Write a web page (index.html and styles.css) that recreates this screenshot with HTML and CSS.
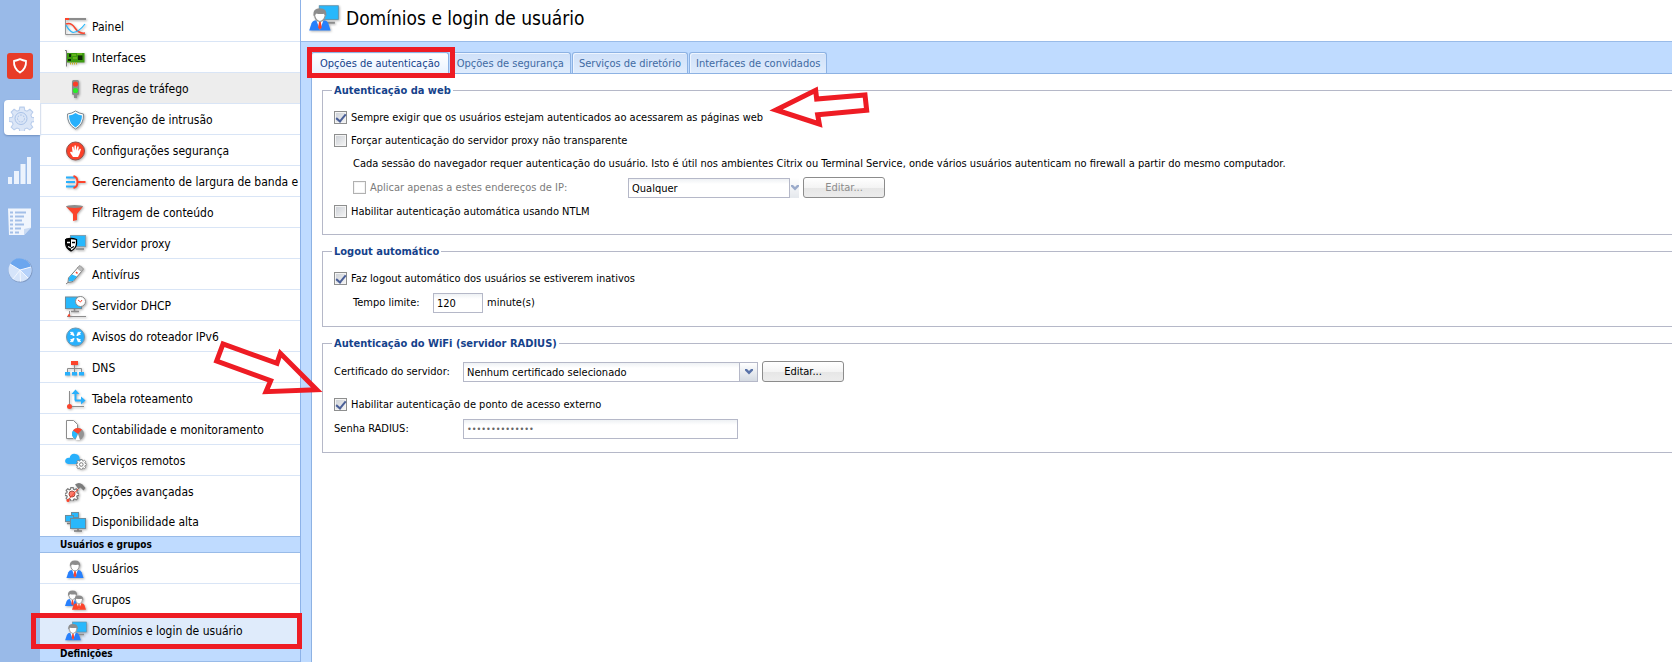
FILE: index.html
```html
<!DOCTYPE html>
<html lang="pt-BR">
<head>
  <meta charset="UTF-8" />
  <meta name="viewport" content="width=device-width, initial-scale=1.0" />
  <title>Domínios e login de usuário</title>
  <link rel="stylesheet" href="styles.css">
</head>
<body>
  <svg class="defs" aria-hidden="true">
    <symbol id="person" viewBox="0 0 18 20">
      <path d="M0 19 L2 13 Q3 10.500 6 10.500 L12 10.500 Q15 10.500 16 13 L18 19Z" fill="#2880fc"/>
      <path d="M6 10.500 L9 18.500 L12 10.500Z" fill="#fff"/>
      <path d="M8.300 11.500 h1.400 l.8 5 -1.500 2 -1.500 -2z" fill="#fc442c"/>
      <path d="M4.500 6 Q5 11 9 11.500 Q13 11 13.500 6 L12 4 H6Z" fill="#fff" stroke="#949494"/>
      <path d="M3.500 6.500 Q3 .5 9 .5 Q15 .5 14.500 6.500 Q13.500 7 13 4.500 Q10 6 5.500 4.500 Q4.500 7 3.500 6.500Z" fill="#8c8c8c"/>
    </symbol>
    <symbol id="person-red" viewBox="0 0 18 20">
      <path d="M0 19 L2 13 Q3 10.500 6 10.500 L12 10.500 Q15 10.500 16 13 L18 19Z" fill="#fc442c"/>
      <path d="M6 10.500 L9 18.500 L12 10.500Z" fill="#fff"/>
      <path d="M8.300 11.500 h1.400 l.8 5 -1.500 2 -1.500 -2z" fill="#fc442c"/>
      <path d="M4.500 6 Q5 11 9 11.500 Q13 11 13.500 6 L12 4 H6Z" fill="#fff" stroke="#949494"/>
      <path d="M3.500 6.500 Q3 .5 9 .5 Q15 .5 14.500 6.500 Q13.500 7 13 4.500 Q10 6 5.500 4.500 Q4.500 7 3.500 6.500Z" fill="#8c8c8c"/>
    </symbol>
    <symbol id="login" viewBox="0 0 22 20">
      <rect x="7.500" y="1" width="14" height="10" fill="#28b8fc" stroke="#5f8ea6" stroke-width=".6"/>
      <path d="M13 13.500 h6" stroke="#8c8c8c" stroke-width="1.500"/>
      <use href="#person" x="0" y="2.500" width="16" height="17.500"/>
    </symbol>
    <symbol id="gear" viewBox="0 0 24 24">
      <path d="M10 1h4l.6 3 2 .8L19.300 3 22 5.600 20.200 8.300l.8 2 3 .6v3.300l-3 .6-.9 2 1.800 2.700-2.700 2.500-2.600-1.700-2 .8-.6 2.900h-4l-.6-2.900-2-.8L4.700 22 2 19.500l1.800-2.700-.9-2L0 14.200v-3.300l3-.6.8-2L2 5.600 4.700 3l2.700 1.800 2-.8z"/>
    </symbol>
    <symbol id="chevron" viewBox="0 0 8 6">
      <path d="M0 0 h2 l2 2 2 -2 h2 v1.500 L4 5.500 0 1.500z" fill="#5872a8"/>
    </symbol>
  </svg>

  <nav class="rail" aria-label="Seções">
    <a href="#" class="rail-logo" aria-label="Início">
      <svg width="16" height="16" viewBox="0 0 16 16"><path d="M8 1.200 Q11 2.500 14 3 Q14.500 10.500 8 14.600 Q1.500 10.500 2 3 Q5 2.500 8 1.200Z" fill="none" stroke="#fff" stroke-width="1.800"/></svg>
    </a>
    <a href="#" class="rail-current" aria-label="Configuração">
      <svg width="26" height="26" viewBox="-1 -1 26 26">
        <use href="#gear" fill="#dbe6f7" stroke="#b9cdec"/>
        <circle cx="12" cy="12.500" r="6" fill="none" stroke="#a9c2e8"/>
        <circle cx="12" cy="12.500" r="3.500" fill="#dbe6f7" stroke="#a9c2e8" stroke-dasharray="2 1"/>
      </svg>
    </a>
    <a href="#" aria-label="Estatísticas">
      <svg width="24" height="28" viewBox="0 0 24 28"><path d="M0 20h4v7H0zM6 14h5v13H6zM12.500 7h5v20h-5zM19 0h4v27h-4z" fill="#ecf3fd"/></svg>
    </a>
    <a href="#" aria-label="Registros">
      <svg width="24" height="30" viewBox="0 0 24 30">
        <path d="M0 2.500h23v19L16 29H1z" fill="#f0f5fd"/><path d="M23 21.500 L16 29 v-6z" fill="#c9daf3"/>
        <path d="M2 6.500h3M7 6.500h11M2 10.500h3M7 10.500h9M2 14.500h3M7 14.500h7M2 18.500h3M7 18.500h9M2 22.500h3M7 22.500h6M2 26.500h3M7 26.500h4" stroke="#a3bfe8" stroke-width="2"/>
      </svg>
    </a>
    <a href="#" aria-label="Relatórios">
      <svg width="26" height="26" viewBox="0 0 26 26">
        <circle cx="13.500" cy="13.500" r="12" fill="#7f9ac4"/><circle cx="13" cy="13" r="11.500" fill="#d5e4fa"/>
        <path d="M13 13 L3 7 A11.500 11.500 0 0 1 24 10Z" fill="#6ba6ee"/>
        <path d="M13 13 L24 10 A11.500 11.500 0 0 1 21 21Z" fill="#b6d2fa"/>
        <path d="M13 13 L3 7 M13 13 L6 22 M13 13 L13.500 24.500 M13 13 L21 21 M13 13 L24 10" stroke="#f2f7ff"/>
      </svg>
    </a>
  </nav>

  <nav class="menu" aria-label="Configuração">
    <ul>
      <li><a href="#"><svg class="icon" viewBox="0 0 22 22">
        <path d="M.5 3v15.500h20" fill="none" stroke="#949494"/><path d="M4 3h17" stroke="#8c8c8c" stroke-width="2"/><path d="M0 3h4" stroke="#fc442c" stroke-width="2"/>
        <path d="M1 8 Q6 6 10 12 T20 17" fill="none" stroke="#fc442c" stroke-width="1.500"/><path d="M1 9 Q4 15 8 16.500 Q14 16 20 8" fill="none" stroke="#28b8fc" stroke-width="1.200"/>
      </svg>Painel</a></li>
      <li><a href="#"><svg class="icon" viewBox="0 0 22 22">
        <path d="M0 3.500h1.500v16" fill="none" stroke="#7c7c7c"/><rect x="2" y="6" width="17.500" height="9.500" fill="#3c9a10"/>
        <path d="M4 7h2v3H4zM13 8.500h4.500V13H13zM3 12h3v2H3z" fill="#102808"/><path d="M7 8h4M8 11h4M12 7h5" stroke="#8ccc28"/>
        <path d="M5 16.500h8" stroke="#c8b020" stroke-width="2" stroke-dasharray="1 1"/>
      </svg>Interfaces</a></li>
      <li class="hovered"><a href="#"><svg class="icon" viewBox="0 0 22 22">
        <rect x="7" y="2" width="7" height="15" rx="1.500" fill="#8c8c8c"/><path d="M9 17h3v3H9z" fill="#8c8c8c"/>
        <circle cx="10.500" cy="6" r="2.600" fill="#fc3c28"/><circle cx="10.500" cy="12.500" r="2.600" fill="#28ec28"/>
      </svg>Regras de tráfego</a></li>
      <li><a href="#"><svg class="icon" viewBox="0 0 22 22">
        <path d="M10.500 2 Q14 4.500 18.500 5 Q19 15.500 10.500 20 Q2 15.500 2.500 5 Q7 4.500 10.500 2Z" fill="#fff" stroke="#7c8890"/>
        <path d="M10.500 4 Q13.500 6 17 6.500 Q17 14.500 10.500 18.500 Q4 14.500 4 6.500 Q7.500 6 10.500 4Z" fill="#28b0fc"/>
      </svg>Prevenção de intrusão</a></li>
      <li><a href="#"><svg class="icon" viewBox="0 0 22 22">
        <circle cx="10.500" cy="11" r="9" fill="#fc4028" stroke="#94504a"/>
        <path d="M8 17 L5 12.500 L6 11.500 L7.500 12.500 L7 7 L8.300 6.500 L9.300 10.500 L9.500 5.500 L11 5.500 L11.300 10.500 L12.500 6.200 L13.800 6.700 L13.200 11 L15 8.500 L16 9.200 L14.500 14 L13 17Z" fill="#fff"/>
      </svg>Configurações segurança</a></li>
      <li><a href="#"><svg class="icon" viewBox="0 0 22 22">
        <path d="M1 6.500h9M1 11h9M1 15.500h9" stroke="#28b0fc" stroke-width="2"/><path d="M8.500 5 Q12.500 6 12.500 11 Q12.500 16 8.500 17 M12 11h8.500" fill="none" stroke="#fc442c" stroke-width="2"/>
      </svg>Gerenciamento de largura de banda e QoS</a></li>
      <li><a href="#"><svg class="icon" viewBox="0 0 22 22">
        <path d="M1 4.500h17l-6 7.500v6l-4 1v-7z" fill="#fc442c"/><ellipse cx="9.500" cy="4.500" rx="8.500" ry="1.500" fill="#8c8c8c"/>
      </svg>Filtragem de conteúdo</a></li>
      <li><a href="#"><svg class="icon" viewBox="0 0 22 22">
        <rect x="5.500" y="2.500" width="15" height="11" fill="#28b8fc" stroke="#7ca0b4"/><path d="M11 16h8" stroke="#949494" stroke-width="2"/>
        <path d="M.7 6.500 Q6 4.500 11.500 6.500 V11 Q11 15.500 6 18 Q1 15.500.7 11Z" fill="#fff"/><path d="M6 5.500h-5V11q.5 5 5 7z" fill="#000"/>
        <path d="M.7 6.500 Q6 4.500 11.500 6.500 V11 Q11 15.500 6 18 Q1 15.500.7 11Z" fill="none" stroke="#000" stroke-width="1.300"/><path d="M2 9.500h3M3 13.500l3 1.500" stroke="#fff" stroke-width="1.300"/><path d="M7 9.500h3M6 15l3-1.500" stroke="#000" stroke-width="1.300"/>
      </svg>Servidor proxy</a></li>
      <li><a href="#"><svg class="icon" viewBox="0 0 22 22">
        <path d="M3.500 14 L12.500 4 L16.500 7.500 L8 17.500 L3 18.500Z" fill="#fff" stroke="#7c7c7c"/><path d="M4 13.500 L7 10.500 L12 12.500 L8 17 L3.500 17.500Z" fill="#28b8fc"/>
        <path d="M3 18.500 L1 20" stroke="#7c7c7c"/><path d="M12 4 L15 1.500 L18.500 5 L16.500 7.500" fill="#bbb" stroke="#949494"/><path d="M11 8 l1.500 1.500" stroke="#fc442c" stroke-width="1.500"/>
      </svg>Antivírus</a></li>
      <li><a href="#"><svg class="icon" viewBox="0 0 22 22">
        <rect x=".5" y="2" width="16" height="11.500" fill="#28b8fc" stroke="#6c8c9c"/><path d="M9.500 14v2.500M6 16.500h8" stroke="#8c8c8c" stroke-width="1.500"/><path d="M4.500 16v5M2 21.500h19" stroke="#8c8c8c"/>
        <circle cx="4" cy="20.500" r="1.200" fill="#fc442c"/><circle cx="15.500" cy="6.500" r="5" fill="#fff" stroke="#8c8c8c"/><path d="M13 5l2.500 2 1.500-2" fill="none" stroke="#fc442c"/>
      </svg>Servidor DHCP</a></li>
      <li><a href="#"><svg class="icon" viewBox="0 0 22 22">
        <circle cx="10.500" cy="11" r="9" fill="#28b0fc" stroke="#6c98b0"/><path d="M5.500 6l3.500 3.500M15.500 6L12 9.500M5.500 16L9 12.500M15.500 16L12 12.500" stroke="#fff" stroke-width="1.600"/>
        <path d="M8 5.500l1.500 4.500L5 8.500zM13 5.500l-1.500 4.500L16 8.500zM8 16.500l1.500-4.500L5 13.500zM13 16.500l-1.500-4.500 4.500 1.500z" fill="#fff"/>
      </svg>Avisos do roteador IPv6</a></li>
      <li><a href="#"><svg class="icon" viewBox="0 0 22 22">
        <path d="M2.500 16v-4.500h14V16M9.500 8v8" fill="none" stroke="#8c8c8c"/><path d="M6 4h7v4H6z" fill="#fc442c"/><path d="M0 15h5v3.500H0zM7 15h5v3.500H7zM14 15h5v3.500h-5z" fill="#28b0fc"/>
      </svg>DNS</a></li>
      <li><a href="#"><svg class="icon" viewBox="0 0 22 22">
        <path d="M4.500 3v16M2 18.500h17" stroke="#8c8c8c"/><circle cx="4.500" cy="18.500" r="2.500" fill="#fc442c"/><path d="M10.500 12.500V5M10 12.500h6" stroke="#28b0fc" stroke-width="2"/><path d="M6.500 6l4-4.500 4 4.500zM16 8.500l4.500 4-4.500 4z" fill="#28b0fc"/>
      </svg>Tabela roteamento</a></li>
      <li><a href="#"><svg class="icon" viewBox="0 0 22 22">
        <path d="M8 19.500H1.500v-18h7l4 4V9" fill="#fff" stroke="#8c8c8c"/><circle cx="13" cy="15" r="6" fill="#949494"/>
        <path d="M13 15 L8 11.500 A6 6 0 0 1 17 10.500Z" fill="#fc442c"/><path d="M13 15 L8 11.500 A6 6 0 0 0 10 20Z" fill="#28b8fc"/><path d="M13 15l-2.500 6h4.500z" fill="#fff"/>
      </svg>Contabilidade e monitoramento</a></li>
      <li><a href="#"><svg class="icon" viewBox="0 0 22 22">
        <path d="M3 14 Q-1 13 .5 9.500 Q2 7 4.500 8 Q6 3 10.500 4 Q15 5 14.500 9 Q17 9 17.500 11 V14Z" fill="#28b0fc"/>
        <use href="#gear" x="11" y="9" width="10.500" height="10.500" fill="#fff" stroke="#7c7c7c" stroke-width="2"/><circle cx="16.300" cy="14.500" r="1.800" fill="#fff" stroke="#7c7c7c"/>
      </svg>Serviços remotos</a></li>
      <li class="plain"><a href="#"><svg class="icon" viewBox="0 0 22 22">
        <use href="#gear" x="0" y="6" width="14" height="14" fill="#fff" stroke="#7c7c7c" stroke-width="2"/><circle cx="7" cy="13" r="3" fill="#fc7c6c" stroke="#a04c44"/><circle cx="3" cy="19.500" r="1.500" fill="#fc442c"/>
        <path d="M3 19l11-12" stroke="#fc442c"/><path d="M10 3.500q4-3 7.500 0l3 3.500-2 2.500-3-3-2 1.500" fill="#7c7c7c"/>
      </svg>Opções avançadas</a></li>
      <li class="plain"><a href="#"><svg class="icon" viewBox="0 0 22 22">
        <g fill="#28b8fc" stroke="#6c8c9c"><rect x="6.500" y="1.500" width="7" height="5"/><rect x=".5" y="4.500" width="8" height="6"/><rect x="5.500" y="7.500" width="15" height="10"/></g><path d="M13 18v2M9 20h8M2 12.500h3" stroke="#7c7c7c" stroke-width="1.500"/>
      </svg>Disponibilidade alta</a></li>
    </ul>
    <h2>Usuários e grupos</h2>
    <ul>
      <li><a href="#"><svg class="icon" viewBox="0 0 22 22"><use href="#person" x="1" y="2" width="18" height="19"/></svg>Usuários</a></li>
      <li><a href="#"><svg class="icon" viewBox="0 0 22 22"><use href="#person" x="0" y="1" width="15" height="17"/><use href="#person-red" x="7" y="6" width="14" height="15.500"/></svg>Grupos</a></li>
      <li class="plain selected"><a href="#"><svg class="icon" viewBox="0 0 22 20"><use href="#login" width="22" height="20"/></svg>Domínios e login de usuário</a><span class="mark"></span></li>
    </ul>
    <h2>Definições</h2>
  </nav>

  <main>
    <header>
      <svg width="30" height="28" viewBox="0 0 22 20"><use href="#login" width="22" height="20"/></svg>
      <h1>Domínios e login de usuário</h1>
    </header>

    <div class="workspace">
      <div class="tabs" role="tablist">
        <button type="button" role="tab" class="tab active" aria-selected="true">Opções de autenticação<span class="mark"></span></button>
        <button type="button" role="tab" class="tab">Opções de segurança</button>
        <button type="button" role="tab" class="tab">Serviços de diretório</button>
        <button type="button" role="tab" class="tab">Interfaces de convidados</button>
      </div>

      <form class="panel">
        <fieldset>
          <legend>Autenticação da web</legend>
          <div class="row"><input type="checkbox" id="require-auth" checked /><label for="require-auth">Sempre exigir que os usuários estejam autenticados ao acessarem as páginas web</label></div>
          <div class="row"><input type="checkbox" id="proxy-auth" /><label for="proxy-auth">Forçar autenticação do servidor proxy não transparente</label></div>
          <p class="row indent">Cada sessão do navegador requer autenticação do usuário. Isto é útil nos ambientes Citrix ou Terminal Service, onde vários usuários autenticam no firewall a partir do mesmo computador.</p>
          <div class="row tall indent">
            <div class="ip-only"><input type="checkbox" id="ip-only" disabled /><label for="ip-only">Aplicar apenas a estes endereços de IP:</label></div>
            <div class="combo short">
              <select aria-label="Endereços de IP"><option>Qualquer</option></select>
              <span class="trigger"><svg width="8" height="6"><use href="#chevron"/></svg></span>
            </div>
            <button type="button" class="btn" disabled>Editar...</button>
          </div>
          <div class="row"><input type="checkbox" id="ntlm" /><label for="ntlm">Habilitar autenticação automática usando NTLM</label></div>
        </fieldset>

        <fieldset>
          <legend>Logout automático</legend>
          <div class="row"><input type="checkbox" id="auto-logout" checked /><label for="auto-logout">Faz logout automático dos usuários se estiverem inativos</label></div>
          <div class="row tall indent"><label for="timeout" class="timeout-label">Tempo limite:</label><input type="text" class="field timeout" id="timeout" value="120" /><span>minute(s)</span></div>
        </fieldset>

        <fieldset>
          <legend>Autenticação do WiFi (servidor RADIUS)</legend>
          <div class="row tall spaced">
            <label for="cert" class="name">Certificado do servidor:</label>
            <div class="combo">
              <select id="cert"><option>Nenhum certificado selecionado</option></select>
              <span class="trigger"><svg width="8" height="6"><use href="#chevron"/></svg></span>
            </div>
            <button type="button" class="btn">Editar...</button>
          </div>
          <div class="row"><input type="checkbox" id="external-ap" checked /><label for="external-ap">Habilitar autenticação de ponto de acesso externo</label></div>
          <div class="row tall"><label for="radius" class="name">Senha RADIUS:</label><input type="password" class="field secret" id="radius" value="12345678901234" /></div>
        </fieldset>
      </form>
    </div>
  </main>

  <svg class="arrow arrow-web" viewBox="0 0 420 390"><path d="M75 105 L194 46 L197 72 L342 60 L347 106 L200 119 L205 147Z"/></svg>
  <svg class="arrow arrow-wifi" viewBox="630 21 360 180"><path d="M669 42 L650 93 L812 152 L798 185 L950 179 L841 70 L831 100Z"/></svg>
</body>
</html>
```
FILE: styles.css
```css
* {
  box-sizing: border-box;
}
body {
  margin: 0;
  position: relative;
  display: flex;
  min-height: 100vh;
  overflow: hidden;
  background: #fff;
  color: #000;
  font: 11px/13px "DejaVu Sans Condensed", "DejaVu Sans", sans-serif;
}
ul, h1, h2, p {
  margin: 0;
  padding: 0;
  list-style: none;
}
.defs {
  position: absolute;
  width: 0;
  height: 0;
}
/* left icon rail */
.rail {
  flex: none;
  width: 40px;
  padding-top: 53px;
  display: flex;
  flex-direction: column;
  align-items: center;
  gap: 21px;
  background: #99bae8;
}
.rail a {
  display: flex;
}
.rail-logo {
  width: 26px;
  height: 26px;
  align-items: center;
  justify-content: center;
  border-radius: 3px;
  background: #e83c28;
}
.rail-current {
  align-self: flex-end;
  width: 36px;
  height: 35px;
  margin-bottom: 1px;
  padding-left: 4px;
  align-items: center;
  border-radius: 4px 0 0 4px;
  background: #fff;
  box-shadow: 0 1px 2px #6f8fbf;
}
/* menu */
.menu {
  flex: none;
  width: 260px;
  padding-top: 11px;
}
.menu li {
  position: relative;
  height: 31px;
  border-bottom: 1px solid #d9e5f6;
}
.menu li.plain {
  height: 30px;
  border-bottom: 0;
}
.menu li.hovered {
  background: #ededed;
}
.menu li.selected {
  background: #dfebfb;
}
.menu a {
  display: flex;
  align-items: center;
  gap: 5px;
  height: 30px;
  padding: 2px 0 0 25px;
  overflow: hidden;
  white-space: nowrap;
  color: #000;
  font-size: 12px;
  text-decoration: none;
}
.icon {
  flex: none;
  width: 22px;
  height: 22px;
  filter: drop-shadow(1px 1px 1px rgba(0, 0, 0, 0.3));
}
.menu h2 {
  height: 17px;
  padding-left: 20px;
  border: solid #99bbe8;
  border-width: 1px 0;
  background: #bfdbff;
  font-size: 10px;
  line-height: 16px;
}
/* main area */
main {
  flex: 1;
  min-width: 0;
  display: flex;
  flex-direction: column;
  border-left: 1px solid #8db2e8;
}
header {
  display: flex;
  align-items: center;
  gap: 7px;
  height: 42px;
  padding: 0 8px 5px;
  border-bottom: 1px solid #99bbe8;
}
header svg {
  filter: drop-shadow(1px 1px 1px rgba(0, 0, 0, 0.3));
}
h1 {
  font-size: 19px;
  font-weight: normal;
  line-height: 24px;
}
.workspace {
  flex: 1;
  display: flex;
  flex-direction: column;
  padding: 10px 0 0 10px;
  background: #bfdbff;
}
.tabs {
  display: flex;
  gap: 1px;
}
.tab {
  position: relative;
  height: 21px;
  padding: 0 6px;
  border: 1px solid #8db2e3;
  border-bottom: 0;
  border-radius: 3px 3px 0 0;
  background: linear-gradient(#cfe0f8, #dfecfd);
  box-shadow: inset 1px 1px 0 #eef5ff;
  color: #416aa3;
  font: inherit;
  white-space: nowrap;
}
.tab.active {
  padding: 0 8px;
  background: linear-gradient(#fff, #eaf3ff);
  color: #15428b;
}
.panel {
  flex: 1;
  padding: 10px 0 0 10px;
  border: solid #8db2e3;
  border-width: 1px 0 0 1px;
  background: #fff;
}
fieldset {
  min-width: 0;
  margin: 0 0 10px;
  padding: 9px 0 11px 11px;
  border: 1px solid #b5b8c8;
  border-right: 0;
}
legend {
  margin-left: -2px;
  padding: 0 2px;
  color: #15428b;
  font-weight: bold;
}
.row {
  display: flex;
  align-items: center;
  height: 23px;
  gap: 4px;
  white-space: nowrap;
}
.row.tall {
  height: 25px;
}
.row.spaced {
  margin-bottom: 9px;
}
.indent {
  padding-left: 19px;
}
input[type="checkbox"] {
  appearance: none;
  flex: none;
  display: grid;
  place-items: center;
  width: 13px;
  height: 13px;
  margin: 0;
  border: 1px solid #8e8f8f;
  background: linear-gradient(135deg, #cbcfd5, #f6f6f6);
  box-shadow: inset 0 0 0 1px #f4f4f4;
}
input[type="checkbox"]:disabled {
  border-color: #b1b1b1;
  background: #fff;
}
input[type="checkbox"]:checked::after {
  content: "";
  width: 4px;
  height: 8px;
  margin-top: -2px;
  border: solid #4a5f97;
  border-width: 0 2px 2px 0;
  transform: rotate(40deg);
}
.ip-only {
  display: flex;
  align-items: center;
  gap: 4px;
  width: 271px;
  color: #7c7c7c;
}
.name {
  width: 125px;
}
.timeout-label {
  width: 76px;
}
.field, .combo select {
  height: 20px;
  margin: 0;
  padding: 1px 3px 0;
  border: 1px solid #b5b8c8;
  border-radius: 0;
  background: linear-gradient(#eef1f4, #fff 5px);
  color: #000;
  font: inherit;
}
.timeout {
  width: 50px;
}
.secret {
  width: 275px;
  color: #666;
  font-size: 9px;
}
.combo {
  display: flex;
  width: 295px;
}
.combo select {
  appearance: none;
  flex: 1;
}
.trigger {
  display: flex;
  align-items: center;
  justify-content: center;
  width: 18px;
  height: 20px;
  border: solid #b5b8c8;
  border-width: 1px 1px 1px 0;
  background: linear-gradient(#fff, #d4dae2);
}
.combo.short {
  width: 171px;
}
.combo.short .trigger {
  width: 9px;
  border: 0;
  overflow: hidden;
  opacity: 0.6;
}
.btn {
  width: 82px;
  height: 21px;
  padding: 0;
  border: 1px solid #8c8c8c;
  border-radius: 3px;
  background: linear-gradient(#fff, #f4f4f4 50%, #e6e6e6 50%, #ececec);
  color: #000;
  font: inherit;
}
.btn:disabled {
  color: #8c8c8c;
}
/* red call-outs drawn over the page */
.mark {
  position: absolute;
  z-index: 1;
  border: 5px solid #ee1c24;
  pointer-events: none;
}
.tab .mark {
  inset: -6px -7px -5px -5px;
}
.menu .mark {
  inset: -2px -2px -4px -9px;
}
.arrow {
  position: absolute;
  fill: #fff;
  stroke: #ee1c24;
  stroke-width: 15;
  pointer-events: none;
}
.arrow-web {
  left: 751px;
  top: 75px;
  width: 140px;
}
.arrow-wifi {
  left: 210px;
  top: 337px;
  width: 120px;
  fill: none;
}
```
